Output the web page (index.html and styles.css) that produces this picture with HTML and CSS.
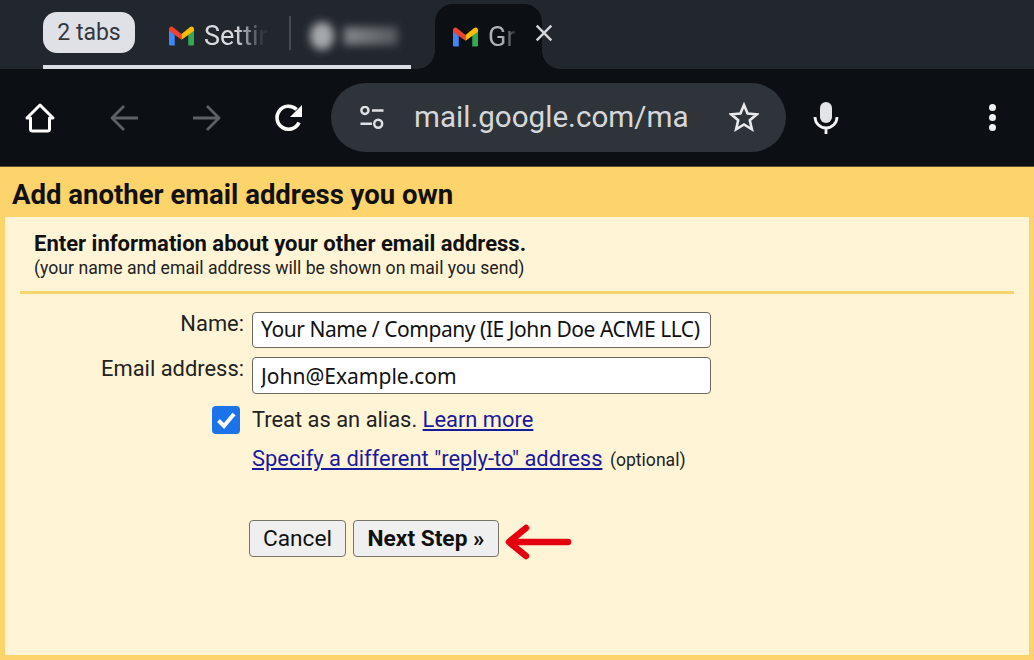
FILE: index.html
```html
<!DOCTYPE html>
<html lang="en">
<head>
<meta charset="utf-8">
<title>Add another email address you own</title>
<link rel="stylesheet" href="styles.css">
</head>
<body>
<header class="chrome">
  <div class="tabstrip">
    <div class="group-line"></div>
    <div class="group-pill">2 tabs</div>
    <div class="tab">
      <svg class="gmail" viewBox="0 0 26 20"><path fill="#4285f4" d="M0 3v15.500A1.500 1.500 0 0 0 1.500 20H6V9z"/><path fill="#34a853" d="M20 9v11h4.500a1.500 1.500 0 0 0 1.500-1.500V3z"/><path fill="#ea4335" d="M6 9 0 4.500V2.500C0 .4 2.400-.7 4 .6L13 8v6z"/><path fill="#fbbc04" d="M20 9l6-4.500V2.500C26 .4 23.600-.7 22 .6L13 8v6z"/></svg>
      <span class="tab-title fade-settings">Settir</span>
    </div>
    <div class="tab-divider"></div>
    <div class="blurred"><span class="blur-dot"></span><span class="blur-bar"></span></div>
    <div class="tab-active">
      <svg class="gmail" viewBox="0 0 26 20"><path fill="#4285f4" d="M0 3v15.500A1.500 1.500 0 0 0 1.500 20H6V9z"/><path fill="#34a853" d="M20 9v11h4.500a1.500 1.500 0 0 0 1.500-1.500V3z"/><path fill="#ea4335" d="M6 9 0 4.500V2.500C0 .4 2.400-.7 4 .6L13 8v6z"/><path fill="#fbbc04" d="M20 9l6-4.500V2.500C26 .4 23.600-.7 22 .6L13 8v6z"/></svg>
      <span class="tab-title fade-gmail">Gr</span>
      <svg class="close" viewBox="0 0 16 16"><path d="M1.500 1.500l13 13M14.500 1.500l-13 13"/></svg>
    </div>
  </div>
  <div class="toolbar">
    <svg class="icon icon-home" viewBox="0 0 32 32"><path d="M3 16 16 3l13 13h-3.500v11a2 2 0 0 1-2 2h-15a2 2 0 0 1-2-2V16z"/></svg>
    <svg class="icon icon-nav icon-back" viewBox="0 0 32 32"><path d="M29 16H4M15 4 3 16l12 12"/></svg>
    <svg class="icon icon-nav icon-forward" viewBox="0 0 32 32"><path d="M3 16h25M17 4l12 12-12 12"/></svg>
    <svg class="icon icon-reload" viewBox="0 0 32 32"><path d="M26 20.500A11.500 11.500 0 1 1 23.500 7.500"/><path class="solid" d="M29 3v12H17z"/></svg>
    <div class="omnibox">
      <svg class="tune" viewBox="0 0 28 26"><circle cx="6" cy="5" r="4"/><path d="M14 5h13M1 20h13"/><circle cx="21" cy="20" r="4.500"/></svg>
      <span class="url">mail.google.com/ma</span>
      <svg class="star" viewBox="0 0 30 30"><path d="M15 3l3.600 8.500 9.200.8-7 6 2.100 9L15 22.500l-7.900 4.800 2.100-9-7-6 9.200-.8z"/></svg>
    </div>
    <svg class="mic" viewBox="0 0 26 34"><rect x="7" y="1" width="12" height="21" rx="6"/><path d="M2 16a11 11 0 0 0 22 0M13 27v6"/></svg>
    <div class="dots"><span></span><span></span><span></span></div>
  </div>
</header>
<main class="page">
  <h1 class="title">Add another email address you own</h1>
  <section class="panel">
    <h2 class="heading">Enter information about your other email address.</h2>
    <p class="sub">(your name and email address will be shown on mail you send)</p>
    <hr class="rule">
    <form class="form">
      <label class="label" for="name">Name:</label>
      <input class="field field-name" id="name" value="Your Name / Company (IE John Doe ACME LLC)">
      <label class="label label-email" for="email">Email address:</label>
      <input class="field field-email" id="email" value="John@Example.com">
      <div class="check-cell"><span class="check"><svg viewBox="0 0 28 28"><path d="M6.500 14.500l5.500 5.500 10-12"/></svg></span></div>
      <div class="alias">Treat as an alias. <a href="#">Learn more</a></div>
      <div class="reply"><a href="#">Specify a different "reply-to" address</a> <small>(optional)</small></div>
      <div class="actions">
        <button class="btn btn-cancel" type="button">Cancel</button>
        <button class="btn btn-next" type="button">Next Step »</button>
        <svg class="arrow" viewBox="0 0 68 36"><path d="M64 18H6M22 4 5 18l17 14"/></svg>
      </div>
    </form>
  </section>
</main>
</body>
</html>
```
FILE: styles.css
```css
* { box-sizing: border-box; }
html, body { margin: 0; padding: 0; }
body {
  width: 1034px;
  height: 660px;
  overflow: hidden;
  font-family: Roboto, "Liberation Sans", sans-serif;
  background: #fdd36b;
}
.chrome { height: 167px; border-bottom: 1px solid #5b4f30; }

/* tab strip */
.tabstrip {
  position: relative;
  height: 69px;
  background: #22272d;
  display: flex;
  align-items: flex-start;
  padding-left: 43px;
}
.group-line {
  position: absolute;
  left: 43px;
  top: 65px;
  width: 368px;
  height: 4px;
  background: #dadde4;
}
.group-pill {
  width: 92px;
  height: 41px;
  margin-top: 12px;
  border-radius: 14px;
  background: #dfe1e7;
  color: #33373d;
  font-size: 23px;
  line-height: 41px;
  text-align: center;
}
.tab {
  display: flex;
  align-items: center;
  gap: 10px;
  height: 41px;
  margin: 15px 0 0 34px;
  width: 100px;
}
.gmail { width: 25px; height: 20px; flex: none; }
.tab-title { font-size: 27px; color: #d8dade; white-space: nowrap; }
.fade-settings {
  -webkit-mask-image: linear-gradient(90deg, #000 50%, rgba(0,0,0,.08) 92%);
  mask-image: linear-gradient(90deg, #000 50%, rgba(0,0,0,.08) 92%);
}
.fade-gmail {
  color: #aeb1b6;
  -webkit-mask-image: linear-gradient(90deg, #000 50%, rgba(0,0,0,.1));
  mask-image: linear-gradient(90deg, #000 50%, rgba(0,0,0,.1));
}
.tab-divider { width: 2px; height: 34px; margin: 16px 0 0 20px; background: #474b50; }
.blurred {
  display: flex;
  align-items: center;
  gap: 10px;
  width: 90px;
  height: 30px;
  margin: 21px 0 0 19px;
  filter: blur(4px);
}
.blur-dot { width: 24px; height: 28px; border-radius: 50%; background: #a6a9ad; flex: none; }
.blur-bar { width: 54px; height: 18px; background: linear-gradient(90deg, #85888c, #55595e); }
.tab-active {
  position: relative;
  width: 107px;
  height: 65px;
  margin: 4px 0 0 35px;
  padding: 0 0 0 18px;
  display: flex;
  align-items: center;
  gap: 10px;
  background: #0c1014;
  border-radius: 18px 18px 0 0;
}
.tab-active::before,
.tab-active::after {
  content: "";
  position: absolute;
  bottom: 0;
  width: 18px;
  height: 18px;
  background: radial-gradient(circle at 0 0, transparent 17.500px, #0c1014 18px);
}
.tab-active::before { left: -18px; }
.tab-active::after { right: -18px; transform: scaleX(-1); }
.close { position: absolute; left: 100px; top: 20px; width: 18px; height: 18px; fill: none; stroke: #d4d6da; stroke-width: 2.200; }

/* toolbar */
.toolbar {
  height: 97px;
  background: #0c1014;
  display: flex;
  align-items: center;
}
.icon { width: 32px; height: 32px; fill: none; flex: none; stroke-linejoin: round; }
.icon-home { margin-left: 24px; stroke: #fff; stroke-width: 3; }
.icon-nav { stroke: #5d6166; stroke-width: 2.800; }
.icon-back { margin-left: 53px; }
.icon-forward { margin-left: 49px; }
.icon-reload { margin-left: 51px; stroke: #fff; stroke-width: 3.600; }
.icon-reload .solid { fill: #fff; stroke: none; }
.omnibox {
  width: 455px;
  height: 69px;
  margin: -1px 0 0 26px;
  padding: 0 27px 0 28px;
  border-radius: 35px;
  background: #2f343a;
  display: flex;
  align-items: center;
}
.tune { width: 26px; height: 23px; fill: none; stroke: #dfe1e4; stroke-width: 2.800; flex: none; }
.url { margin-left: 29px; font-size: 29.600px; color: #d5d7da; white-space: nowrap; }
.star { width: 30px; height: 30px; margin-left: auto; fill: none; stroke: #e8eaed; stroke-width: 2.600; }
.mic { width: 26px; height: 34px; margin-left: 27px; fill: none; stroke: #f2f3f5; stroke-width: 2.800; flex: none; }
.mic rect { fill: #e2e4e8; stroke: none; }
.dots { margin-left: 150px; display: flex; flex-direction: column; gap: 3px; }
.dots span { width: 7px; height: 7px; border-radius: 50%; background: #eef0f2; }

/* page */
.page { height: 493px; padding: 0 5px 5px; display: flex; flex-direction: column; }
.title { margin: 0; height: 50px; padding: 13px 0 0 7px; font-size: 27.500px; line-height: 30px; font-weight: 700; color: #111; }
.panel { flex: 1; background: #fff5d6; padding: 15px 15px 0; }
.heading { margin: 0 0 0 14px; font-size: 22px; line-height: 24px; font-weight: 700; color: #111; }
.sub { margin: 2px 0 0 14px; font-size: 17.650px; line-height: 20px; color: #222; }
.rule { margin: 13px 0 0; border: 0; height: 3px; background: #f8d56f; }
.form {
  display: grid;
  grid-template-columns: 239px 459px;
  column-gap: 8px;
  margin: 18px 0 0 -15px;
  font-size: 21.900px;
  color: #222;
}
.label { text-align: right; line-height: 24px; }
.field {
  width: 459px;
  height: 36px;
  padding: 0 8px;
  border: 1.500px solid #6b6860;
  border-radius: 4px;
  background: #fff;
  color: #111;
  font-family: "Noto Sans", sans-serif;
  font-size: 21px;
  outline: 0;
}
.field-name { letter-spacing: -0.45px; padding-bottom: 2px; }
.field-email { height: 37px; }
.field-email, .label-email { margin-top: 9px; }
.check-cell { display: flex; justify-content: flex-end; padding-right: 4px; margin-top: 12px; }
.check { width: 28px; height: 28px; border-radius: 4px; background: #1a73e8; }
.check svg { display: block; width: 28px; height: 28px; fill: none; stroke: #fff; stroke-width: 4; }
.alias { margin-top: 12px; line-height: 28px; }
a { color: #1a1a9c; }
.reply { grid-column: 2; margin-top: 11px; line-height: 28px; }
.reply small { font-size: 17.600px; color: #222; margin-left: 2px; }
.actions { grid-column: 2; display: flex; align-items: flex-start; margin: 46px 0 0 -3px; }
.btn {
  height: 37px;
  border: 1.500px solid #77746c;
  border-radius: 4px;
  background: #efefef;
  color: #111;
  font-family: Roboto, sans-serif;
  font-size: 22.700px;
  padding: 0;
}
.btn-cancel { width: 97px; }
.btn-next { width: 146px; margin-left: 7px; font-weight: 700; }
.arrow { width: 68px; height: 36px; margin: 4px 0 0 5px; fill: none; stroke: #e4000f; stroke-width: 6.500; stroke-linecap: round; stroke-linejoin: round; flex: none; }
```
